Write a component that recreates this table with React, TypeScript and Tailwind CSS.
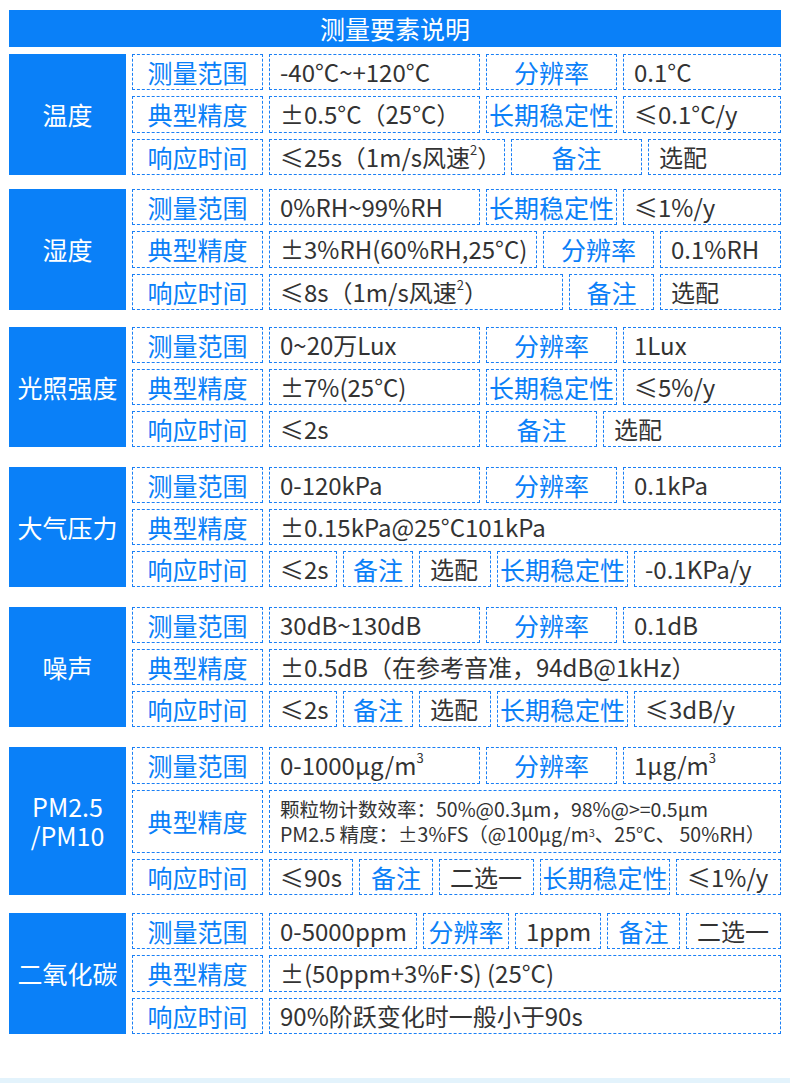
import type { ReactNode } from "react";

type Cell = { t: ReactNode; k?: boolean; w?: string };
type Block = { name: ReactNode; mt: string; h: string; rows: { h?: string; cells: Cell[] }[] };

const K = (t: ReactNode, w = "w-[131px]"): Cell => ({ t, k: true, w });
const V = (t: ReactNode, w = "flex-1"): Cell => ({ t, w });
const sup = (s: string) => <sup className="text-[13px] relative -top-[7px]">{s}</sup>;

const blocks: Block[] = [
  {
    name: "温度",
    mt: "mt-[7px]",
    h: "h-[121px]",
    rows: [
      { cells: [K("测量范围"), V("-40°C~+120°C", "w-[211px]"), K("分辨率"), V("0.1°C")] },
      { cells: [K("典型精度"), V("±0.5°C（25°C）", "w-[211px]"), K("长期稳定性"), V("≤0.1°C/y")] },
      { cells: [K("响应时间"), V(<>≤25s（1m/s风速{sup("2")}）</>, "w-[236px]"), K("备注"), V("选配")] },
    ],
  },
  {
    name: "湿度",
    mt: "mt-[14px]",
    h: "h-[121px]",
    rows: [
      { cells: [K("测量范围"), V("0%RH~99%RH", "w-[211px]"), K("长期稳定性"), V("≤1%/y")] },
      { cells: [K("典型精度"), V("±3%RH(60%RH,25°C)", "w-[268px]"), K("分辨率", "w-[111px]"), V("0.1%RH")] },
      { cells: [K("响应时间"), V(<>≤8s（1m/s风速{sup("2")}）</>, "w-[294px]"), K("备注", "w-[85px]"), V("选配")] },
    ],
  },
  {
    name: "光照强度",
    mt: "mt-[17px]",
    h: "h-[120px]",
    rows: [
      { cells: [K("测量范围"), V("0~20万Lux", "w-[211px]"), K("分辨率"), V("1Lux")] },
      { cells: [K("典型精度"), V("±7%(25°C)", "w-[211px]"), K("长期稳定性"), V("≤5%/y")] },
      { cells: [K("响应时间"), V("≤2s", "w-[211px]"), K("备注", "w-[111px]"), V("选配")] },
    ],
  },
  {
    name: "大气压力",
    mt: "mt-[20px]",
    h: "h-[120px]",
    rows: [
      { cells: [K("测量范围"), V("0-120kPa", "w-[211px]"), K("分辨率"), V("0.1kPa")] },
      { cells: [K("典型精度"), V("±0.15kPa@25°C101kPa")] },
      {
        cells: [
          K("响应时间"),
          V("≤2s", "w-[68px]"),
          K("备注", "w-[70px]"),
          V("选配", "w-[72px]"),
          K("长期稳定性"),
          V("-0.1KPa/y"),
        ],
      },
    ],
  },
  {
    name: "噪声",
    mt: "mt-[20px]",
    h: "h-[120px]",
    rows: [
      { cells: [K("测量范围"), V("30dB~130dB", "w-[211px]"), K("分辨率"), V("0.1dB")] },
      { cells: [K("典型精度"), V("±0.5dB（在参考音准，94dB@1kHz）")] },
      {
        cells: [
          K("响应时间"),
          V("≤2s", "w-[68px]"),
          K("备注", "w-[70px]"),
          V("选配", "w-[72px]"),
          K("长期稳定性"),
          V("≤3dB/y"),
        ],
      },
    ],
  },
  {
    name: (
      <>
        PM2.5
        <br />
        /PM10
      </>
    ),
    mt: "mt-[20px]",
    h: "h-[148px]",
    rows: [
      { cells: [K("测量范围"), V(<>0-1000μg/m{sup("3")}</>, "w-[211px]"), K("分辨率"), V(<>1μg/m{sup("3")}</>)] },
      {
        h: "h-[63px] flex-none",
        cells: [
          K("典型精度"),
          V(
            <div className="text-[19.5px] leading-[25px]">
              <div>颗粒物计数效率：50%@0.3μm，98%@&gt;=0.5μm</div>
              <div>
                PM2.5 精度：±3%FS（@100μg/m<sup className="text-[11px] relative -top-[5px]">3</sup>、25°C、 50%RH）
              </div>
            </div>
          ),
        ],
      },
      {
        cells: [
          K("响应时间"),
          V("≤90s", "w-[84px]"),
          K("备注", "w-[74px]"),
          V("二选一", "w-[95px]"),
          K("长期稳定性", "w-[130px]"),
          V("≤1%/y"),
        ],
      },
    ],
  },
  {
    name: "二氧化碳",
    mt: "mt-[18px]",
    h: "h-[121px]",
    rows: [
      {
        cells: [
          K("测量范围"),
          V("0-5000ppm", "w-[148px]"),
          K("分辨率", "w-[86px]"),
          V("1ppm", "w-[86px]"),
          K("备注", "w-[73px]"),
          V("二选一"),
        ],
      },
      {
        cells: [
          K("典型精度"),
          V(
            <>
              ±(50ppm+3%F<span style={{ fontFamily: '"Noto Sans", sans-serif' }}>·</span>S) (25°C)
            </>
          ),
        ],
      },
      { cells: [K("响应时间"), V("90%阶跃变化时一般小于90s")] },
    ],
  },
];

export default function App() {
  return (
    <div
      className="h-[1083px] w-[790px] bg-white flex flex-col"
      style={{ fontFamily: '"Noto Sans CJK SC", "Noto Sans", sans-serif' }}
    >
      <div className="px-[9px]">
        <div className="mt-[10px] h-[37px] bg-[#0a80f8] flex items-center justify-center text-white text-[25px] leading-none">
          测量要素说明
        </div>

        {blocks.map((b, i) => (
          <div key={i} className={`${b.mt} ${b.h} flex gap-[6px]`}>
            <div className="w-[117px] shrink-0 bg-[#0a80f8] flex items-center justify-center text-center text-white text-[25px] leading-[29px]">
              <div>{b.name}</div>
            </div>
            <div className="flex-1 flex flex-col gap-[6px]">
              {b.rows.map((r, j) => (
                <div key={j} className={`${r.h ?? "flex-1"} flex gap-[6px]`}>
                  {r.cells.map((c, n) => (
                    <div
                      key={n}
                      className={`${c.w} shrink-0 border border-dashed border-[#1a7ff5] flex items-center whitespace-nowrap overflow-hidden leading-[30px] ${
                        c.k ? "justify-center text-[25px] text-[#0a80f8]" : "pl-[10px] text-[24px] text-[#333333]"
                      }`}
                    >
                      {c.t}
                    </div>
                  ))}
                </div>
              ))}
            </div>
          </div>
        ))}
      </div>

      <div className="mt-auto h-[5px] bg-[#e3f3fc]" />
    </div>
  );
}
